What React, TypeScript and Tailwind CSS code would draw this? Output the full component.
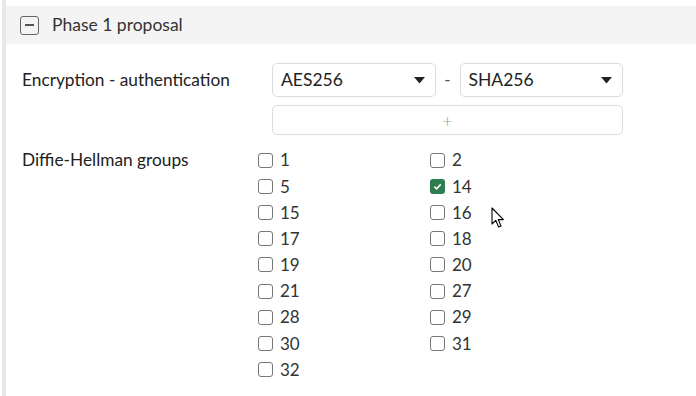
import { useState } from "react";

const left = ["1", "5", "15", "17", "19", "21", "28", "30", "32"];
const right = ["2", "14", "16", "18", "20", "27", "29", "31"];

function Check({ label, checked }: { label: string; checked?: boolean }) {
  return (
    <label className="flex items-center h-[26.2px] gap-[7px] text-[17px] text-[#333]">
      {checked ? (
        <span className="w-[15px] h-[15px] rounded-[3px] bg-[#2d7d4f] flex items-center justify-center">
          <svg width="9" height="9" viewBox="0 0 10 10">
            <path d="M1.5 5.2 L4 7.6 L8.6 2.6" fill="none" stroke="#fff" strokeWidth="1.8" />
          </svg>
        </span>
      ) : (
        <span className="w-[15px] h-[15px] rounded-[3px] border border-[#777] bg-white" />
      )}
      <span>{label}</span>
    </label>
  );
}

function Select({ value }: { value: string }) {
  return (
    <div className="h-[34px] flex-1 rounded-[5px] border border-[#dcdcdc] bg-white flex items-center justify-between pl-[8px] pr-[10px] text-[17.5px] text-[#222]">
      <span>{value}</span>
      <svg width="11" height="7" viewBox="0 0 11 7">
        <path d="M0 0 H11 L5.5 6.5 Z" fill="#222" />
      </svg>
    </div>
  );
}

export default function App() {
  const [open] = useState(true);
  return (
    <div className="w-[696px] h-[396px] bg-white font-['Lato',sans-serif] pl-[2px] overflow-hidden relative">
      <div className="h-full border-l-[4px] border-[#e8e8e8]">
        <div className="h-[6px]" />
        <div className="h-[38px] bg-[#f4f4f4] flex items-center pl-[14px] gap-[13px]">
          <span className="w-[19px] h-[19px] rounded-[3px] border-[1.5px] border-[#666] flex items-center justify-center">
            <span className="w-[9px] h-[1.5px] bg-[#555]" />
          </span>
          <span className="text-[17.5px] text-[#333]">Phase 1 proposal</span>
        </div>
        {open && (
          <div className="pl-[16px]">
            <div className="flex mt-[19px]">
              <div className="w-[250px] h-[34px] flex items-center text-[17.3px] text-[#222]">
                Encryption - authentication
              </div>
              <div className="w-[351px]">
                <div className="flex items-center">
                  <Select value="AES256" />
                  <span className="w-[24px] text-center text-[17px] text-[#555]">-</span>
                  <Select value="SHA256" />
                </div>
                <div className="mt-[8px] h-[30px] rounded-[5px] border border-[#dcdcdc] flex items-center justify-center text-[18px] text-[#999] font-light">
                  +
                </div>
              </div>
            </div>
            <div className="flex mt-[12px]">
              <div className="w-[236px] h-[26px] flex items-center text-[17.3px] text-[#222]">
                Diffie-Hellman groups
              </div>
              <div className="flex">
                <div className="w-[172px]">
                  {left.map((l) => (
                    <Check key={l} label={l} />
                  ))}
                </div>
                <div>
                  {right.map((r) => (
                    <Check key={r} label={r} checked={r === "14"} />
                  ))}
                </div>
              </div>
            </div>
          </div>
        )}
      </div>
      <svg className="absolute left-[491px] top-[207px]" width="14" height="22" viewBox="0 0 14 22">
        <path d="M1 1 L1 17 L4.8 13.4 L7.6 20 L10 19 L7.3 12.6 L12.4 12.6 Z" fill="#fff" stroke="#000" strokeWidth="1.1" strokeLinejoin="round" />
      </svg>
    </div>
  );
}
